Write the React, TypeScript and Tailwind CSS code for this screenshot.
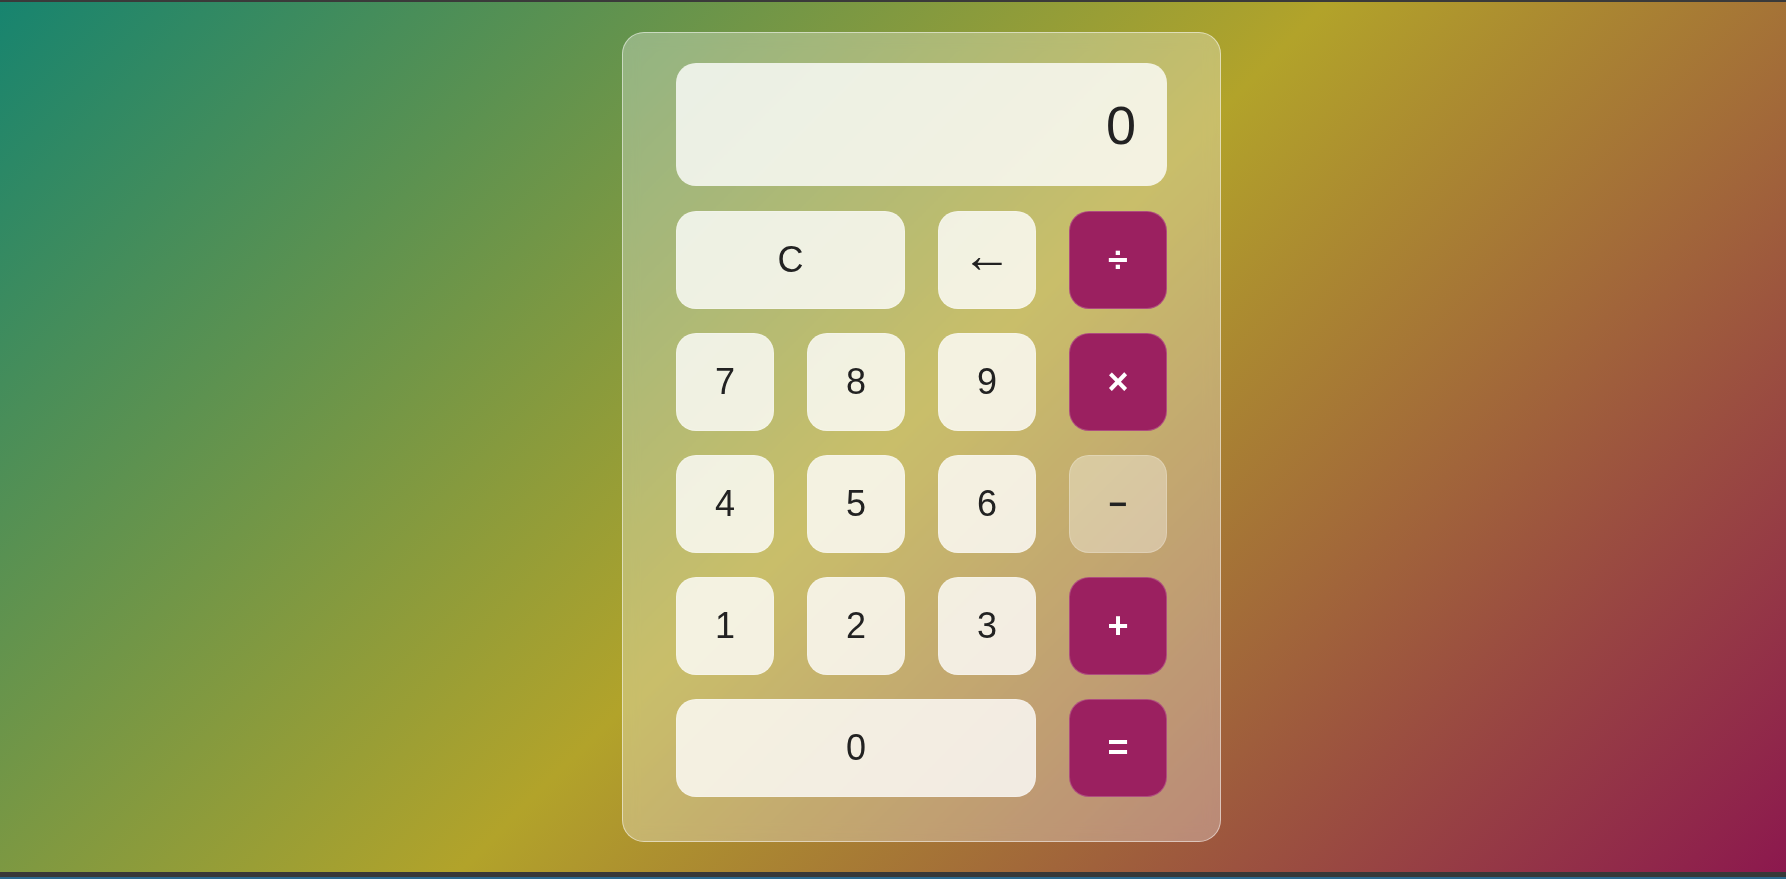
import { useState } from "react";

type Key = {
  label: string;
  kind: "num" | "op" | "soft";
  wide?: "col-span-2" | "col-span-3";
  value?: string;
};

const keys: Key[] = [
  { label: "C", kind: "num", wide: "col-span-2", value: "clear" },
  { label: "←", kind: "num", value: "back" },
  { label: "÷", kind: "op", value: "/" },
  { label: "7", kind: "num" },
  { label: "8", kind: "num" },
  { label: "9", kind: "num" },
  { label: "×", kind: "op", value: "*" },
  { label: "4", kind: "num" },
  { label: "5", kind: "num" },
  { label: "6", kind: "num" },
  { label: "−", kind: "soft", value: "-" },
  { label: "1", kind: "num" },
  { label: "2", kind: "num" },
  { label: "3", kind: "num" },
  { label: "+", kind: "op", value: "+" },
  { label: "0", kind: "num", wide: "col-span-3" },
  { label: "=", kind: "op", value: "=" },
];

const keyStyle = {
  num: "bg-white/80 text-[#222] font-normal text-[36px]",
  op: "bg-[#9b2060] text-white font-bold text-[36px]",
  soft: "bg-white/35 text-[#222] font-bold text-[32px]",
};

export default function App() {
  const [display, setDisplay] = useState("0");

  const press = (k: Key) => {
    const v = k.value ?? k.label;
    if (v === "clear") return setDisplay("0");
    if (v === "back") return setDisplay((d) => (d.length > 1 ? d.slice(0, -1) : "0"));
    if (v === "=") {
      try {
        // eslint-disable-next-line no-new-func
        const r = Function(`return (${display})`)();
        setDisplay(String(r));
      } catch {
        setDisplay("0");
      }
      return;
    }
    setDisplay((d) => (d === "0" && /[0-9]/.test(v) ? v : d + v));
  };

  return (
    <div className="h-screen flex flex-col font-['Liberation_Sans',Arial,sans-serif]">
      <div className="h-[2px] bg-[#3a3a3a]" />

      <main className="flex-1 flex items-center justify-center pl-[57px] bg-[linear-gradient(135deg,#17846f_0%,#b2a32a_50%,#8c184e_100%)]">
        {/* Calculator card */}
        <div className="w-[599px] rounded-[22px] border border-white/50 bg-white/30 backdrop-blur-sm pt-[30px] px-[53px] pb-[44px]">
          {/* Display */}
          <div className="h-[123px] mb-[25px] rounded-[20px] bg-white/80 flex items-center justify-end pr-[31px] overflow-hidden">
            <span className="text-[54px] leading-none text-[#222]">
              {display.replace(/\*/g, "×").replace(/\//g, "÷")}
            </span>
          </div>

          {/* Keypad */}
          <div className="grid grid-cols-[repeat(4,98px)] gap-x-[33px] gap-y-6">
            {keys.map((k) => (
              <button
                key={k.label}
                onClick={() => press(k)}
                className={`h-[98px] rounded-[20px] border border-white/20 flex items-center justify-center leading-none cursor-pointer ${keyStyle[k.kind]} ${
                  k.value === "back" ? "!text-[50px] pb-[10px]" : ""
                } ${k.wide ?? ""}`}
              >
                {k.label}
              </button>
            ))}
          </div>
        </div>
      </main>

      <div className="h-[5px] bg-[#383838]" />
      <div className="h-[2px] bg-[#2b6a90]" />
    </div>
  );
}
